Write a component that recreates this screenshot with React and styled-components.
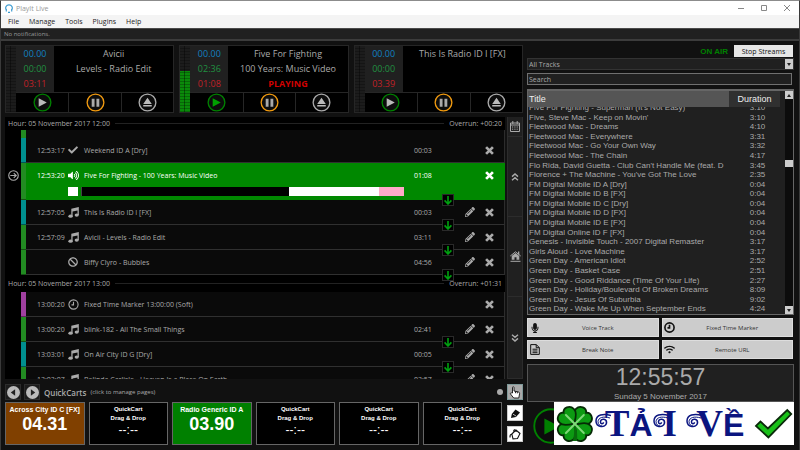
import React from 'react';
import styled, { createGlobalStyle, css } from 'styled-components';
import { FaCheck, FaVolumeUp, FaBan, FaPencilAlt, FaMicrophone, FaWifi } from 'react-icons/fa';

const ui = '"Open Sans", "Noto Sans", sans-serif';
const arial = '"Liberation Sans", Arial, sans-serif';

const GlobalStyle = createGlobalStyle`
   * {
      box-sizing: border-box;
   }
   body {
      margin: 0;
      background: #111;
      color: #aaa;
      font-family: ${ui};
      font-size: 7px;
      overflow: hidden;
   }
   button, input, select {
      font: inherit;
      color: inherit;
      margin: 0;
      padding: 0;
      border: 0;
      background: none;
   }
   svg {
      display: block;
   }
`

/* ---------- window ---------- */

const Window = styled.div`
   height: 100vh;
   display: flex;
   flex-direction: column;
   border-top: 1px solid #8c8c8c;
   border-left: 1px solid #3a3a3a;
   border-right: 1px solid #3a3a3a;
`

const TitleBar = styled.header`
   height: 14px;
   display: flex;
   align-items: center;
   gap: 3px;
   padding: 0 8px 0 4px;
   background: #fff;
   color: #999;
`

const WindowButtons = styled.div`
   margin-left: auto;
   display: flex;
   gap: 15px;

   button {
      width: 8px;
      height: 8px;
      color: #888;
   }
`

const MenuBar = styled.nav`
   height: 13px;
   display: flex;
   align-items: center;
   gap: 10px;
   padding: 0 7px;
   background: #f4f4f4;

   button {
      color: #222;
   }
`

const Notifications = styled.div`
   height: 13px;
   padding: 0 3px;
   line-height: 10px;
   background: #202020;
   border-top: 1px solid #4a4a4a;
   border-bottom: 2px solid #3c3c3c;
   color: #999;
   font-size: 6px;
`

const Main = styled.main`
   flex: 1;
   min-height: 0;
   display: grid;
   grid-template-columns: minmax(0, 518fr) minmax(0, 267fr);
   gap: 4px;
   padding: 4px 5px 5px 4px;
`

const LeftSide = styled.div`
   display: flex;
   flex-direction: column;
   min-height: 0;
`

const RightSide = styled.aside`
   position: relative;
   display: flex;
   flex-direction: column;
   min-height: 0;
`

/* ---------- players ---------- */

const Players = styled.section`
   display: grid;
   grid-template-columns: repeat(3, 1fr);
   gap: 5px;
`

const PlayerBox = styled.article`
   display: grid;
   grid-template-columns: 10px 1fr;
   height: 68px;
   border: 1px solid #262626;
   background: #000;
`

const Meter = styled.div`
   background:
      repeating-linear-gradient(transparent 0 2px, rgba(0, 0, 0, 0.25) 2px 3px),
      linear-gradient(90deg, transparent 4px, rgba(0, 0, 0, 0.4) 4px 5px, transparent 5px),
      linear-gradient(to top, #0a8a0a ${p => p.$level}%, #1c1c1c ${p => p.$level}%);
`

const PlayerBody = styled.div`
   display: flex;
   flex-direction: column;
   min-width: 0;
`

const PlayerInfo = styled.div`
   flex: 1;
   display: grid;
   grid-template-columns: 38px minmax(0, 1fr);
   font-size: 9px;
   line-height: 15px;
   text-align: center;
`

const Times = styled.div`
   display: flex;
   flex-direction: column;
   background: #202020;
`

const Time = styled.span`
   color: ${p => p.$color};
`

const TrackText = styled.div`
   display: flex;
   flex-direction: column;
   white-space: nowrap;

   strong {
      color: #d00000;
   }
`

const PlayerButtons = styled.div`
   display: grid;
   grid-template-columns: repeat(3, 1fr);
   height: 20px;
   border-top: 1px solid #262626;

   button {
      display: grid;
      place-items: center;
   }
   button + button {
      border-left: 1px solid #262626;
   }
`

/* ---------- playlist ---------- */

const Middle = styled.section`
   flex: 1;
   min-height: 0;
   display: grid;
   grid-template-columns: minmax(0, 1fr) 16px;
   gap: 2px;
   margin-top: 4px;
`

const Playlist = styled.div`
   background: #000;
   overflow: hidden;
`

const HourHeader = styled.h2`
   display: flex;
   align-items: center;
   gap: 5px;
   height: ${p => (p.$first ? 13 : 17)}px;
   margin: 0;
   padding: 0 3px;
   font-size: 7px;
   font-weight: 400;
   white-space: nowrap;

   &::before {
      content: '';
      order: 1;
      flex: 1;
      height: 1px;
      background: #222;
   }
   span:last-child {
      order: 2;
   }
`

const TrackRow = styled.div`
   position: relative;
   display: grid;
   grid-template-columns: 16px 5px minmax(0, 1fr);
   height: ${p => p.$height || 25}px;
`

const Marker = styled.div`
   display: grid;
   place-items: center;
   padding-bottom: 12px;
`

const Stripe = styled.div`
   background: ${p => p.$color};
   border-bottom: 1px solid rgba(0, 0, 0, 0.4);
`

const TrackBody = styled.div`
   padding: 0 10px 0 11px;
   background: #0a0a0a;
   border-right: 1px solid #2c2c2c;
   border-bottom: 1px solid #303030;
   ${p => p.$active && css`
      background: #008800;
      border-color: #008800;
      color: #fff;
   `}
`

const TrackLine = styled.div`
   display: grid;
   grid-template-columns: 31px 16px minmax(0, 1fr) 50px 20px 10px;
   align-items: center;
   height: 24px;
   white-space: nowrap;
`

const IconButton = styled.button`
   width: 11px;
   height: 11px;
   display: grid;
   place-items: center;
`

const Progress = styled.div`
   display: grid;
   grid-template-columns: 10px 3px 208px 90px 25px;
   height: 9px;
   margin-left: 31px;

   span:nth-child(1), span:nth-child(4) {
      background: #fff;
   }
   span:nth-child(3) {
      background: #000;
      border-left: 1px solid #444;
   }
   span:nth-child(5) {
      background: #ffaac8;
   }
`

const Segue = styled.button`
   position: absolute;
   z-index: 1;
   right: 51px;
   bottom: -6px;
   width: 12px;
   height: 12px;
   display: grid;
   place-items: center;
   background: #000;
   border: 1px solid #2a2a2a;
`

const SideNav = styled.nav`
   display: grid;
   grid-template-rows: 20px 80fr 80fr 82fr;
   background: #202020;

   button {
      display: grid;
      place-items: center;
      border: 1px solid #2c2c2c;
      border-top: 0;
   }
`

/* ---------- quick carts ---------- */

const QuickArea = styled.section`
   display: grid;
   grid-template-columns: minmax(0, 1fr) 16px;
   gap: 4px;
   margin-top: 5px;
`

const QuickHead = styled.div`
   display: flex;
   align-items: center;
   gap: 3px;
   height: 16px;

   strong {
      font-size: 8px;
      font-weight: 600;
      padding: 0 1px;
   }
   small {
      font-size: 6px;
   }
`

const PageButton = styled.button`
   width: 16px;
   height: 16px;
   display: grid;
   place-items: center;
   background: #1c1c1c;
   border: 1px solid #2c2c2c;
`

const Dot = styled.i`
   width: 6px;
   height: 6px;
   margin-left: auto;
   border-radius: 50%;
   background: #aaa;
`

const Carts = styled.div`
   display: grid;
   grid-template-columns: repeat(6, minmax(0, 1fr));
   gap: 4px;
   margin-top: 2px;
   padding-right: 1px;
`

const Cart = styled.button`
   display: flex;
   flex-direction: column;
   align-items: center;
   height: 43px;
   padding-top: 2px;
   background: ${p => p.$color || '#000'};
   border: 1px solid #666;
   color: #fff;
   font-family: ${arial};
   font-weight: 700;
   font-size: ${p => (p.$color ? 7 : 6)}px;
   line-height: 9px;
   white-space: nowrap;

   b {
      font-size: ${p => (p.$color ? 18 : 12)}px;
      font-weight: ${p => (p.$color ? 700 : 400)};
      line-height: ${p => (p.$color ? 20 : 14)}px;
   }
`

const Tools = styled.div`
   display: flex;
   flex-direction: column;
   justify-content: space-between;
   padding-bottom: 3px;
`

const Tool = styled.button`
   width: 16px;
   height: 16px;
   display: grid;
   place-items: center;
   background: ${p => (p.$on ? '#aaa' : '#fff')};
   border: 1px solid ${p => (p.$on ? '#7f9a9a' : '#ccc')};
`

/* ---------- library ---------- */

const StreamBar = styled.div`
   display: flex;
   justify-content: flex-end;
   align-items: center;
   gap: 6px;
   height: 12px;
   margin: 0 1px 1px 0;
   font-family: ${arial};

   span {
      color: #008000;
      font-size: 8px;
      font-weight: 700;
   }
   button {
      width: 59px;
      height: 12px;
      background: #e6e6e6;
      color: #111;
      font-family: ${ui};
   }
`

const SelectWrap = styled.label`
   position: relative;
   display: block;

   select {
      display: block;
      width: 100%;
      height: 12px;
      padding-left: 1px;
      appearance: none;
      background: #202020;
      border: 1px solid #333;
   }
`

const Chevron = styled.span`
   position: absolute;
   right: 1px;
   top: 1px;
   width: 8px;
   height: 10px;
   display: grid;
   place-items: center;
   background: #ccc;
   pointer-events: none;
`

const Search = styled.input`
   height: 12px;
   margin: 3px 2px 4px 0;
   padding: 0 1px;
   background: #202020;
   border: 1px solid #707070;

   &::placeholder {
      color: #aaa;
      opacity: 1;
   }
`

const Library = styled.div`
   flex: 1;
   min-height: 0;
   display: grid;
   grid-template-columns: minmax(0, 1fr) 8px;
   gap: 2px;
   background: #202020;
   border: 1px solid #666;
   border-top-width: 2px;
   overflow: hidden;
`

const Table = styled.table`
   display: flex;
   flex-direction: column;
   min-height: 0;
   font-family: ${arial};
   font-size: 8px;
   line-height: 10px;
   white-space: nowrap;

   tr {
      display: grid;
      grid-template-columns: minmax(0, 1fr) 51px;
      min-height: 0;
   }
   th, td {
      padding: 0 1px;
      font-weight: 400;
      text-align: left;
      overflow: hidden;
   }
   th:last-child, td:last-child {
      text-align: center;
   }
   thead {
      z-index: 1;
      padding-right: 3px;
      background: #202020;
   }
   tbody {
      flex: 1;
      min-height: 0;
      display: grid;
      grid-auto-rows: minmax(0, 1fr);
      margin-top: -4px;
   }
   th {
      height: 16px;
      font-size: 9px;
      line-height: 16px;
      background: #555;
      color: #eee;
   }
   th:last-child {
      background: #303030;
   }
   td {
      overflow: visible;
   }
`

const Scroll = styled.div`
   display: flex;
   flex-direction: column;
   background: #0c0c0c;

   button, i {
      height: 8px;
      display: grid;
      place-items: center;
      background: #ccc;
   }
   i {
      height: 7px;
      margin: 61px 0 auto;
   }
`

const Actions = styled.div`
   display: grid;
   grid-template-columns: 1fr 1fr;
   gap: 3px;
   margin-top: 3px;
   padding-right: 1px;
`

const Action = styled.button`
   display: grid;
   grid-template-columns: 14px 1fr 4px;
   align-items: center;
   height: 19px;
   background: #ccc;
   border: 1px solid #ddd;
   color: #333;
   font-size: 6px;

   svg {
      justify-self: center;
      color: #111;
   }
`

const Clock = styled.div`
   display: flex;
   flex-direction: column;
   align-items: center;
   height: 38px;
   margin-top: 5px;
   background: #202020;
   border: 1px solid #555;
   font-family: ${arial};
   font-size: 8px;
   line-height: 13px;

   time {
      font-size: 23px;
      line-height: 25px;
   }
`

const Footer = styled.div`
   display: flex;
   align-items: center;
   height: 43px;
   padding: 5px 0 0 5px;
`

const Banner = styled.a`
   position: absolute;
   right: 0;
   bottom: 0;
   width: 240px;
   height: 43px;
   display: flex;
   align-items: center;
   justify-content: space-between;
   padding: 0 1px;
   background: #fff;
   color: #0b1580;
   text-decoration: none;
`

const Word = styled.span`
   display: flex;
   align-items: baseline;
   font-family: "Liberation Serif", "Times New Roman", serif;
   font-size: 37px;
   font-weight: 700;
   line-height: 43px;
   padding: 2px 10px 0 0;

   b {
      font-family: ${arial};
      font-size: 32px;
   }
   svg {
      margin-right: -6px;
      align-self: center;
   }
`

const Round = ({ color, size = 19, width = 1.4, children }) => (
   <svg width={size} height={size} viewBox="0 0 20 20">
      <circle cx="10" cy="10" r="8.8" fill="#0c0c0c" stroke={color} strokeWidth={width} />
      {children}
   </svg>
)

const Cross = () => (
   <svg width="9" height="9" viewBox="0 0 10 10" stroke="currentColor" strokeWidth="3">
      <path d="M1.2 1.2l7.6 7.6M8.8 1.2L1.2 8.8" />
   </svg>
)

const Music = () => (
   <svg width="11" height="11" viewBox="0 0 12 12" fill="currentColor">
      <path d="M3.6 1.9L11.8 0v8.6h-1.4V3.8L5 5v5H3.6z" />
      <ellipse cx="2.8" cy="10" rx="2.4" ry="1.7" />
      <ellipse cx="9.5" cy="8.8" rx="2.3" ry="1.7" />
   </svg>
)

const ClockIcon = ({ size = 11, bold }) => (
   <svg width={size} height={size} viewBox="0 0 12 12" fill="none" stroke="currentColor" strokeWidth={bold ? 1.8 : 1.2}>
      <circle cx="6" cy="6" r="5" />
      <path d="M6 3v3.4H3.8" />
   </svg>
)

const Note = () => (
   <svg width="10" height="11" viewBox="0 0 10 11" fill="none" stroke="currentColor">
      <path d="M.7.6h5.6l3 3v6.8H.7zM6.2.6v3.1h3M2.5 5.2h5M2.5 7h5M2.5 8.7h5" />
   </svg>
)

const Wifi = () => <FaWifi size={11} />

const Triangle = ({ up }) => (
   <svg width="4" height="3" viewBox="0 0 4 3"><path d={up ? 'M0 3h4L2 0z' : 'M0 0h4L2 3z'} fill="#222" /></svg>
)

const DownArrow = () => (
   <svg width="8" height="9" viewBox="0 0 8 9" fill="none" stroke="#00a010" strokeWidth="1.6">
      <path d="M4 0v8M.6 4.4L4 8l3.4-3.6" />
   </svg>
)

const Chevrons = ({ down }) => (
   <svg width="8" height="8" viewBox="0 0 8 8" fill="none" stroke="currentColor" strokeWidth="1.4">
      <path d={down ? 'M1 .8l3 2.6L7 .8M1 4.4L4 7l3-2.6' : 'M1 3.6L4 1l3 2.6M1 7.2l3-2.6 3 2.6'} />
   </svg>
)

const Curl = () => (
   <svg width="16" height="24" viewBox="0 0 16 24" fill="none" stroke="#0b1580">
      <path d="M16 2.500C8 0 1 2 1 8c0 6.500 9.500 7.500 10.500 2 .5-4.500-5.500-5-6-1.300-.2 2.500 2.800 2.700 3 .5" strokeWidth="1.500" />
      <path d="M15 5C8 3 3.500 4.500 3 8.500c0 3 2 4.500 4 4.500" />
   </svg>
)

const Clover = () => (
   <svg width="40" height="40" viewBox="-20 -20 40 40">
      {[45, 135, 225, 315].map(a => (
         <path
            key={a}
            transform={`rotate(${a})`}
            d="M0-1C-4-3-10-6-10-11.500c0-6 7-8.500 10-4.500 3-4 10-1.500 10 4.500C10-6 4-3 0-1z"
            fill="#0c9a12"
            stroke="#062a06"
            strokeWidth="1.800"
         />
      ))}
      <path d="M-1 2c1 5 0 10-1 15h4C3 12 2 7 1 2z" fill="#086a0c" />
      <path d="M-9-9L9 9M9-9L-9 9" stroke="#7fd878" strokeWidth="2" strokeLinecap="round" />
   </svg>
)

const icons = {
   check: <FaCheck size={10} />,
   speaker: <FaVolumeUp size={11} />,
   music: <Music />,
   ban: <FaBan size={10} />,
   clock: <ClockIcon />,
}

const GREEN = '#228b22'
const TEAL = '#009090'
const PURPLE = '#a040a0'

const players = [
   { times: ['00.00', '00:00', '03:11'], lines: ['Avicii', 'Levels - Radio Edit'], level: 0 },
   { times: ['00.00', '02:36', '01:08'], lines: ['Five For Fighting', '100 Years: Music Video'], level: 62, playing: true },
   { times: ['00.00', '00:00', '03.39'], lines: ['This Is Radio ID I [FX]'], level: 0 },
]

const hours = [
   {
      label: 'Hour: 05 November 2017 12:00',
      overrun: 'Overrun: +00:20',
      tracks: [
         { color: GREEN, height: 8 },
         { color: TEAL, time: '12:53:17', icon: 'check', title: 'Weekend ID A [Dry]', length: '00:03' },
         { color: GREEN, time: '12:53:20', icon: 'speaker', title: 'Five For Fighting - 100 Years: Music Video', length: '01:08', active: true, height: 37, segue: true },
         { color: TEAL, time: '12:57:05', icon: 'music', title: 'This Is Radio ID I [FX]', length: '00:03', edit: true, segue: true },
         { color: GREEN, time: '12:57:09', icon: 'music', title: 'Avicii - Levels - Radio Edit', length: '03:11', edit: true, segue: true },
         { color: GREEN, time: '', icon: 'ban', title: 'Biffy Clyro - Bubbles', length: '04:56', edit: true, segue: true },
      ],
   },
   {
      label: 'Hour: 05 November 2017 13:00',
      overrun: 'Overrun: +01:31',
      tracks: [
         { color: PURPLE, time: '13:00:20', icon: 'clock', title: 'Fixed Time Marker 13:00:00 (Soft)', length: '' },
         { color: GREEN, time: '13:00:20', icon: 'music', title: 'blink-182 - All The Small Things', length: '02:41', edit: true, segue: true },
         { color: TEAL, time: '13:03:01', icon: 'music', title: 'On Air City ID G [Dry]', length: '00:05', edit: true, segue: true },
         { color: GREEN, time: '13:03:07', icon: 'music', title: 'Belinda Carlisle - Heaven Is a Place On Earth', length: '03:57', edit: true },
      ],
   },
]

const carts = [
   { title: 'Across City ID C [FX]', time: '04.31', color: '#804000' },
   {},
   { title: 'Radio Generic ID A', time: '03.90', color: '#008000' },
   {},
   {},
   {},
]

const library = [
   ["Five For Fighting - Superman (It's Not Easy)", '3:10'],
   ["Five, Steve Mac - Keep on Movin'", '3:10'],
   ['Fleetwood Mac - Dreams', '4:10'],
   ['Fleetwood Mac - Everywhere', '3:31'],
   ['Fleetwood Mac - Go Your Own Way', '3:32'],
   ['Fleetwood Mac - The Chain', '4:17'],
   ["Flo Rida, David Guetta - Club Can't Handle Me (feat. D", '3:45'],
   ["Florence + The Machine - You've Got The Love", '2:35'],
   ['FM Digital Mobile ID A [Dry]', '0:04'],
   ['FM Digital Mobile ID B [FX]', '0:04'],
   ['FM Digital Mobile ID C [Dry]', '0:04'],
   ['FM Digital Mobile ID D [FX]', '0:04'],
   ['FM Digital Mobile ID E [FX]', '0:04'],
   ['FM Digital Online ID F [FX]', '0:04'],
   ['Genesis - Invisible Touch - 2007 Digital Remaster', '3:17'],
   ['Girls Aloud - Love Machine', '3:17'],
   ['Green Day - American Idiot', '2:52'],
   ['Green Day - Basket Case', '2:51'],
   ['Green Day - Good Riddance (Time Of Your Life)', '2:27'],
   ['Green Day - Holiday/Boulevard Of Broken Dreams', '8:09'],
   ['Green Day - Jesus Of Suburbia', '9:02'],
   ['Green Day - Wake Me Up When September Ends', '4:24'],
]

function Player({ times, lines, level, playing }) {
   return (
      <PlayerBox>
         <Meter $level={level} />
         <PlayerBody>
            <PlayerInfo>
               <Times>
                  <Time $color="#1080c0">{times[0]}</Time>
                  <Time $color="#209040">{times[1]}</Time>
                  <Time $color="#c02028">{times[2]}</Time>
               </Times>
               <TrackText>
                  {lines.map(line => <span key={line}>{line}</span>)}
                  {playing && <strong>PLAYING</strong>}
               </TrackText>
            </PlayerInfo>
            <PlayerButtons>
               <button aria-label="Play">
                  <Round color="#008000"><path d="M6 5.500v9l8.500-4.500z" fill={playing ? '#00a000' : '#bbb'} /></Round>
               </button>
               <button aria-label="Pause">
                  <Round color="#f09a10"><path d="M6 6h3v8.500H6zM11 6h3v8.500h-3z" fill="#aaa" /></Round>
               </button>
               <button aria-label="Eject">
                  <Round color="#aaa"><path d="M5.500 11.500h9L10 5zM5.500 12.500h9v1.800h-9z" fill="#bbb" /></Round>
               </button>
            </PlayerButtons>
         </PlayerBody>
      </PlayerBox>
   )
}

function Track({ color, time, icon, title, length, active, height, edit, segue }) {
   return (
      <TrackRow $height={height}>
         <Marker>
            {active && (
               <svg width="11" height="11" viewBox="0 0 12 12" fill="none" stroke="#aaa" strokeWidth="1.2">
                  <circle cx="6" cy="6" r="5.200" />
                  <path d="M2.500 6h6.500M6.300 3.300L9 6 6.300 8.700" />
               </svg>
            )}
         </Marker>
         <Stripe $color={color} />
         <TrackBody $active={active}>
            {title && (
               <TrackLine>
                  <span>{time}</span>
                  {icons[icon]}
                  <span>{title}</span>
                  <span>{length}</span>
                  <span>{edit && <IconButton aria-label="Edit"><FaPencilAlt size={10} /></IconButton>}</span>
                  <IconButton aria-label="Remove"><Cross /></IconButton>
               </TrackLine>
            )}
            {active && <Progress><span /><span /><span /><span /><span /></Progress>}
         </TrackBody>
         {segue && <Segue aria-label="Segue"><DownArrow /></Segue>}
      </TrackRow>
   )
}

function QuickCarts() {
   return (
      <QuickArea>
         <div>
            <QuickHead>
               <PageButton aria-label="Previous page">
                  <svg width="13" height="13" viewBox="0 0 12 12"><circle cx="6" cy="6" r="6" fill="#bbb" /><path d="M7.500 3v6l-4-3z" fill="#222" /></svg>
               </PageButton>
               <PageButton aria-label="Next page">
                  <svg width="13" height="13" viewBox="0 0 12 12"><circle cx="6" cy="6" r="6" fill="#bbb" /><path d="M4.500 3v6l4-3z" fill="#222" /></svg>
               </PageButton>
               <strong>QuickCarts</strong>
               <small>(click to manage pages)</small>
               <Dot />
            </QuickHead>
            <Carts>
               {carts.map((cart, i) => (
                  <Cart key={i} $color={cart.color}>
                     <span>{cart.title || 'QuickCart'}</span>
                     {!cart.title && <span>Drag &amp; Drop</span>}
                     <b>{cart.time || '--:--'}</b>
                  </Cart>
               ))}
            </Carts>
         </div>
         <Tools>
            <Tool $on aria-label="Play carts">
               <svg width="12" height="13" viewBox="0 0 12 13" fill="#fff" stroke="#111" strokeWidth=".9">
                  <path d="M3.500 7V1.500c0-1 1.500-1 1.500 0V5l4.500 1c1 .3 1.200.9 1 2l-.7 4H4.700L1.500 8c-.5-1 .6-1.600 1.200-1zM6.500 5.400v1.800M8.300 5.800v1.600" />
               </svg>
            </Tool>
            <Tool aria-label="Edit carts">
               <svg width="11" height="11" viewBox="0 0 11 11" fill="#111">
                  <path d="M1 10l.8-4L5.500 1.500l4.500 3L6 9z" /><path d="M3 6.200L6 8" stroke="#fff" strokeWidth=".7" />
               </svg>
            </Tool>
            <Tool aria-label="Colour carts">
               <svg width="12" height="12" viewBox="0 0 12 12" fill="none" stroke="#111" strokeWidth="1.100">
                  <path d="M2.800 6L7 2l4 3.500-2.500 5-4.500.4zM5 4.500C4 1.500 6 .6 7.300 3.800M3 6C.8 6.300.8 7.800 1 9.500" />
               </svg>
            </Tool>
         </Tools>
      </QuickArea>
   )
}

function TrackLibrary() {
   return (
      <Library>
         <Table>
            <thead>
               <tr><th>Title</th><th>Duration</th></tr>
            </thead>
            <tbody>
               {library.map(([title, duration]) => (
                  <tr key={title}><td>{title}</td><td>{duration}</td></tr>
               ))}
            </tbody>
         </Table>
         <Scroll>
            <button aria-label="Scroll up"><Triangle up /></button>
            <i />
            <button aria-label="Scroll down"><Triangle /></button>
         </Scroll>
      </Library>
   )
}

function App() {
   return (
      <Window>
         <GlobalStyle />
         <TitleBar>
            <svg width="8" height="9" viewBox="0 0 8 9" fill="none" stroke="#3a9ad0" strokeWidth="1.200">
               <path d="M1.500 6.500C-.4 3.500 1.400.8 4 .8s4.400 2.700 2.500 5.700M1.300 5v2.500M6.700 5v2.500M3 8.300h2" />
            </svg>
            <span>PlayIt Live</span>
            <WindowButtons>
               <button aria-label="Minimize"><svg width="8" height="8"><path d="M1 4.500h6" stroke="currentColor" /></svg></button>
               <button aria-label="Maximize"><svg width="8" height="8"><path d="M1.500 1.500h5v5h-5z" fill="none" stroke="currentColor" /></svg></button>
               <button aria-label="Close"><svg width="8" height="8"><path d="M1 1l6 6M7 1L1 7" stroke="currentColor" /></svg></button>
            </WindowButtons>
         </TitleBar>
         <MenuBar>
            {['File', 'Manage', 'Tools', 'Plugins', 'Help'].map(item => <button key={item}>{item}</button>)}
         </MenuBar>
         <Notifications>No notifications.</Notifications>
         <Main>
            <LeftSide>
               <Players>
                  {players.map((player, i) => <Player key={i} {...player} />)}
               </Players>
               <Middle>
                  <Playlist>
                     {hours.map((hour, i) => (
                        <React.Fragment key={hour.label}>
                           <HourHeader $first={i === 0}>
                              <span>{hour.label}</span>
                              <span>{hour.overrun}</span>
                           </HourHeader>
                           {hour.tracks.map((track, j) => <Track key={j} {...track} />)}
                        </React.Fragment>
                     ))}
                  </Playlist>
                  <SideNav>
                     <button aria-label="Calendar">
                        <svg width="10" height="11" viewBox="0 0 10 11" fill="none" stroke="currentColor">
                           <path d="M.5 2h9v8.500h-9zM.5 4h9M2.800 0v3M7.200 0v3" />
                           <path d="M2 6h6M2 8.200h6" strokeDasharray="1.200 1.100" />
                        </svg>
                     </button>
                     <button aria-label="Up"><Chevrons /></button>
                     <button aria-label="Home">
                        <svg width="11" height="11" viewBox="0 0 11 11" fill="currentColor">
                           <path d="M5.500 2L9.300 5v3.800H6.500V6.200h-2v2.600H1.700V5zM8 .5h1.300v3H8z" />
                           <path d="M.3 5l5.200-4.200L10.700 5" fill="none" stroke="currentColor" />
                           <path d="M.5 9.800h10v1H.5z" />
                        </svg>
                     </button>
                     <button aria-label="Down"><Chevrons down /></button>
                  </SideNav>
               </Middle>
               <QuickCarts />
            </LeftSide>
            <RightSide>
               <StreamBar>
                  <span>ON AIR</span>
                  <button>Stop Streams</button>
               </StreamBar>
               <SelectWrap>
                  <select aria-label="Track group">
                     <option>All Tracks</option>
                  </select>
                  <Chevron><Triangle /></Chevron>
               </SelectWrap>
               <Search aria-label="Search" placeholder="Search" />
               <TrackLibrary />
               <Actions>
                  <Action><FaMicrophone size={10} /><span>Voice Track</span></Action>
                  <Action><ClockIcon bold /><span>Fixed Time Marker</span></Action>
                  <Action><Note /><span>Break Note</span></Action>
                  <Action><Wifi /><span>Remote URL</span></Action>
               </Actions>
               <Clock>
                  <time>12:55:57</time>
                  <span>Sunday 5 November 2017</span>
               </Clock>
               <Footer>
                  <button aria-label="Play">
                     <Round color="#008000" size={38} width={1}><path d="M6.500 6v8.500l8-4.200z" fill="#008000" /></Round>
                  </button>
               </Footer>
               <Banner href="#download">
                  <Clover />
                  <Word>
                     <Curl />T<b>Ả</b><Curl />I&nbsp;<Curl />V<b>Ề</b>
                  </Word>
                  <svg width="39" height="32" viewBox="0 0 39 32">
                     <path d="M2 18l4.500-4.500L14 20.500 33.500 2l4 4L14.500 29.500z" fill="#18c018" stroke="#0a2a0a" strokeWidth="1.800" />
                  </svg>
               </Banner>
            </RightSide>
         </Main>
      </Window>
   )
}

export default App;
